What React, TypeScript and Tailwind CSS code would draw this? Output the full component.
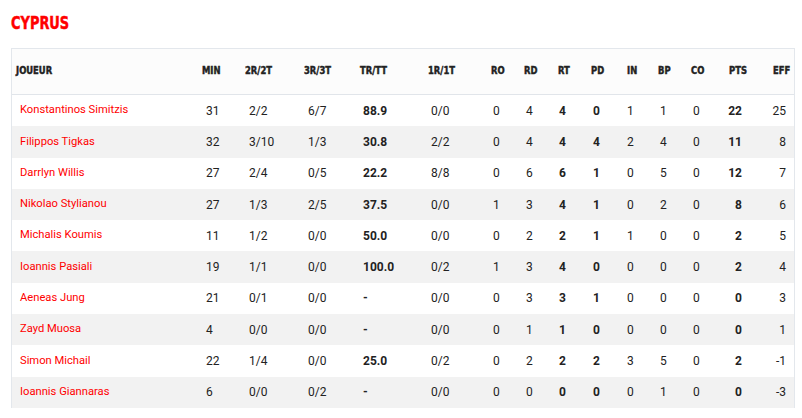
const cols = [
  { key: "name", label: "JOUEUR", w: "w-[184px]", hp: "pl-[4px]", dp: "pl-[8px]" },
  { key: "min", label: "MIN", w: "w-[44px]", hp: "pl-[6px]", dp: "pl-[10px]" },
  { key: "p2", label: "2R/2T", w: "w-[60px]", hp: "pl-[5px]", dp: "pl-[9px]" },
  { key: "p3", label: "3R/3T", w: "w-[55px]", hp: "pl-[4px]", dp: "pl-[8px]" },
  { key: "pct", label: "TR/TT", w: "w-[65px]", hp: "pl-[5px]", dp: "pl-[8px]", bold: true },
  { key: "ft", label: "1R/1T", w: "w-[65px]", hp: "pl-[8px]", dp: "pl-[11px]" },
  { key: "ro", label: "RO", w: "w-[32px]", hp: "pl-[6px]", dp: "pl-[8px]" },
  { key: "rd", label: "RD", w: "w-[35px]", hp: "pl-[7px]", dp: "pl-[9px]" },
  { key: "rt", label: "RT", w: "w-[33px]", hp: "pl-[6px]", dp: "pl-[7px]", bold: true },
  { key: "pd", label: "PD", w: "w-[35px]", hp: "pl-[6px]", dp: "pl-[8px]", bold: true },
  { key: "in", label: "IN", w: "w-[32px]", hp: "pl-[7px]", dp: "pl-[7px]" },
  { key: "bp", label: "BP", w: "w-[33px]", hp: "pl-[6px]", dp: "pl-[8px]" },
  { key: "co", label: "CO", w: "w-[35px]", hp: "pl-[6px]", dp: "pl-[8px]" },
  { key: "pts", label: "PTS", w: "w-[40px]", hp: "pl-[9px]", dp: "pr-[18px] text-right", bold: true },
  { key: "eff", label: "EFF", w: "w-[34px]", hp: "pl-[13px]", dp: "pr-[8px] text-right" },
];

const rows = [
  ["Konstantinos Simitzis", "31", "2/2", "6/7", "88.9", "0/0", "0", "4", "4", "0", "1", "1", "0", "22", "25"],
  ["Filippos Tigkas", "32", "3/10", "1/3", "30.8", "2/2", "0", "4", "4", "4", "2", "4", "0", "11", "8"],
  ["Darrlyn Willis", "27", "2/4", "0/5", "22.2", "8/8", "0", "6", "6", "1", "0", "5", "0", "12", "7"],
  ["Nikolao Stylianou", "27", "1/3", "2/5", "37.5", "0/0", "1", "3", "4", "1", "0", "2", "0", "8", "6"],
  ["Michalis Koumis", "11", "1/2", "0/0", "50.0", "0/0", "0", "2", "2", "1", "1", "0", "0", "2", "5"],
  ["Ioannis Pasiali", "19", "1/1", "0/0", "100.0", "0/2", "1", "3", "4", "0", "0", "0", "0", "2", "4"],
  ["Aeneas Jung", "21", "0/1", "0/0", "-", "0/0", "0", "3", "3", "1", "0", "0", "0", "0", "3"],
  ["Zayd Muosa", "4", "0/0", "0/0", "-", "0/0", "0", "1", "1", "0", "0", "0", "0", "0", "1"],
  ["Simon Michail", "22", "1/4", "0/0", "25.0", "0/2", "0", "2", "2", "2", "3", "5", "0", "2", "-1"],
  ["Ioannis Giannaras", "6", "0/0", "0/2", "-", "0/0", "0", "0", "0", "0", "0", "1", "0", "0", "-3"],
];

// condensed heavy face for the title and column heads
const heading =
  "font-['DejaVu_Sans_Condensed','DejaVu_Sans',sans-serif] font-bold [-webkit-text-stroke:0.45px_currentColor]";

export default function App() {
  return (
    <div className="min-h-screen bg-white pl-[11px] pr-[7px] pt-[13px] font-['Roboto',sans-serif]">
      <h2 className={`${heading} text-[18px] leading-[20px] text-[#ff0000]`}>
        <span className="inline-block origin-left scale-x-[0.8]">CYPRUS</span>
      </h2>

      <div className="mt-[15px] border-x border-t border-[#e3e7ec]">
        <div className="flex h-[46px] items-center border-b border-[#e1e5ea] bg-[#fcfcfc]">
          {cols.map((c) => (
            <div key={c.key} className={`${c.w} ${c.hp} shrink-0 ${heading} text-[11px] text-[#222]`}>
              <span className="inline-block origin-left scale-x-[0.85]">{c.label}</span>
            </div>
          ))}
        </div>

        {rows.map((r, i) => (
          <div
            key={r[0]}
            className={`flex h-[31.3px] items-center text-[12px] ${i % 2 ? "bg-[#f2f2f2]" : "bg-white"}`}
          >
            {cols.map((c, j) => (
              <div
                key={c.key}
                className={`${c.w} ${c.dp} shrink-0 ${
                  j === 0 ? "text-[11.2px] text-[#ff0000]" : "text-[#222]"
                } ${c.bold ? "font-bold" : ""}`}
              >
                {r[j]}
              </div>
            ))}
          </div>
        ))}
      </div>
    </div>
  );
}
